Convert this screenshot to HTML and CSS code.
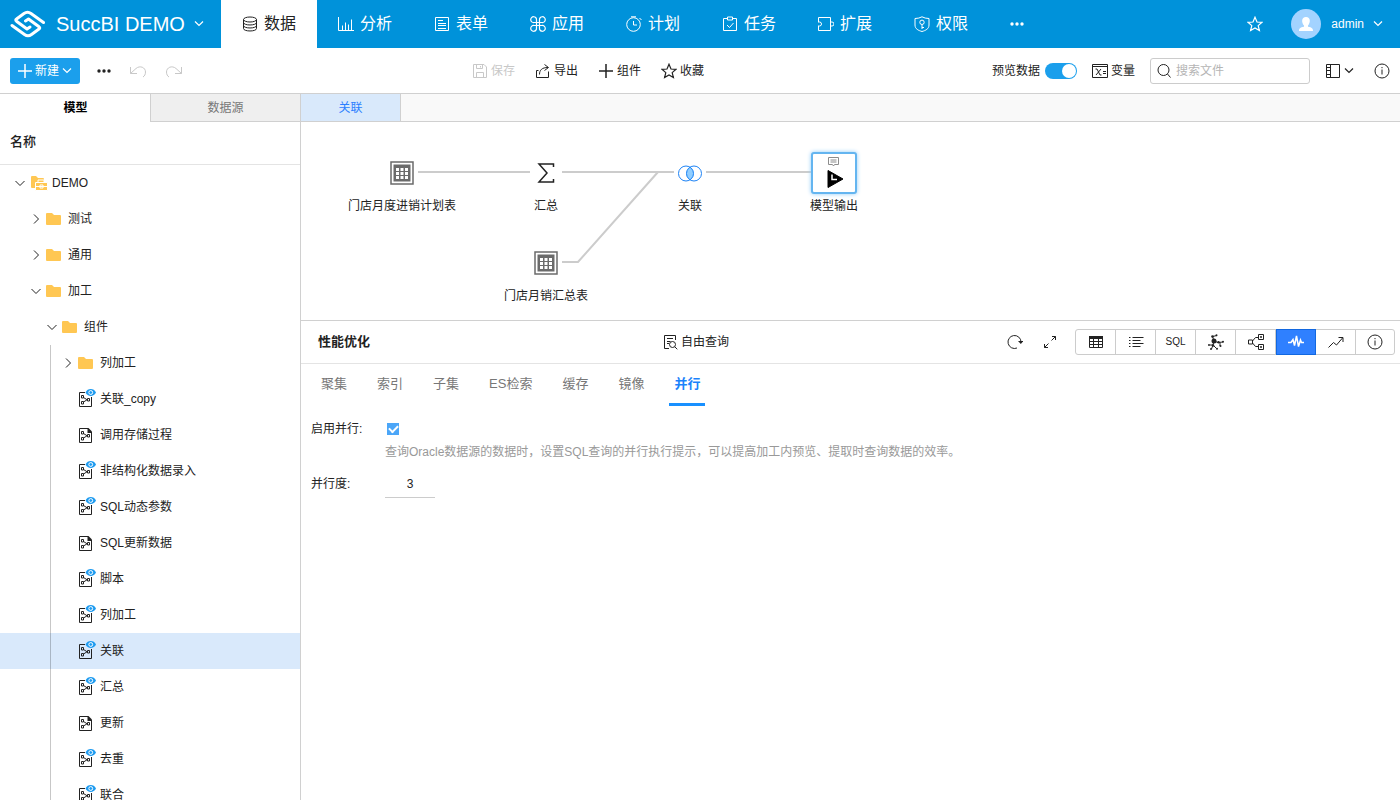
FILE: index.html
```html
<!DOCTYPE html>
<html lang="zh-CN">
<head>
<meta charset="utf-8">
<title>SuccBI DEMO</title>
<link rel="stylesheet" href="styles.css">
</head>
<body>
<svg class="defs" aria-hidden="true">
  <symbol id="down" viewBox="0 0 16 16"><path d="M3.500 6 8 10.500 12.500 6"/></symbol>
  <symbol id="down-sm" viewBox="0 0 12 12"><path stroke-width="1.200" d="M2 3.500 6 7.500 10 3.500"/></symbol>
  <symbol id="right" viewBox="0 0 16 16"><path d="M6 3.500 10.500 8 6 12.500"/></symbol>
  <symbol id="dots" viewBox="0 0 16 16"><g fill="currentColor" stroke="none"><circle cx="3" cy="8" r="1.700"/><circle cx="8" cy="8" r="1.700"/><circle cx="13" cy="8" r="1.700"/></g></symbol>
  <symbol id="plus" viewBox="0 0 16 16"><path stroke-width="1.500" d="M8 1v14M1 8h14"/></symbol>
  <symbol id="star" viewBox="0 0 16 16"><path stroke-width="1.200" d="M8 1.200 10 6l5 .3-3.800 3.300 1.200 5L8 12l-4.400 2.600 1.200-5L1 6.300 6 6z"/></symbol>
  <symbol id="info" viewBox="0 0 16 16"><circle cx="8" cy="8" r="7"/><path d="M8 6.500v5M8 4v1.200"/></symbol>
  <symbol id="folder" viewBox="0 0 20 20"><path fill="#ffc753" stroke="none" d="M0 5q0-1 1-1h5l2 2h6q1 0 1 1v8q0 1-1 1H1q-1 0-1-1z"/></symbol>
  <symbol id="project" viewBox="0 0 20 20"><path fill="#ffc753" stroke="none" d="M1 4q0-1 1-1h4l2 2h5q1 0 1 1v9H2q-1 0-1-1z"/><path fill="#ffc753" stroke="#fff" d="M5.500 9.500H8V7h6v2.500h3.500v8h-12z"/><path stroke="#fff" d="M8 9.500h6M6 13.500h11M10 12v3h3v-3z"/></symbol>
  <symbol id="file" viewBox="0 0 20 20"><path d="M10 3.500H1.500v14h12V8"/><path fill="currentColor" stroke="none" d="M9.500 3h1L14 6.500V8H9.500z"/><path d="M3.500 6.500h2V9h-2zM3.500 12.500h2V15h-2zM9.500 9.500h2V12h-2zM5.500 8.500 9.500 11M5.500 13l4-2.500"/></symbol>
  <symbol id="fileview" viewBox="0 0 20 20"><path d="M7 3.500H1.500v14h12V8"/><path d="M3.500 6.500h2V9h-2zM3.500 12.500h2V15h-2zM9.500 9.500h2V12h-2zM5.500 8.500 9.500 11M5.500 13l4-2.500"/><path fill="#1e9bf0" stroke="none" d="M7.500 3.500C9.500-1.100 16-1.100 18 3.500c-2 4.600-8.500 4.600-10.500 0z"/><circle cx="12.750" cy="3.500" r="1.900" stroke="#fff"/></symbol>
  <symbol id="table" viewBox="0 0 24 24"><path stroke="#6b6b6b" stroke-width="1.500" d="M1 1h22v22H1z"/><path fill="#6b6b6b" stroke="none" d="M3.500 3.500h17v17h-17z"/><path fill="#fff" stroke="none" d="M6 7h3v3H6zm4.500 0h3v3h-3zM15 7h3v3h-3zM6 11h3v3H6zm4.500 0h3v3h-3zm4.500 0h3v3h-3zM6 15h3v3H6zm4.500 0h3v3h-3zm4.500 0h3v3h-3z"/></symbol>
</svg>

<header class="topbar">
  <button class="brand">
    <svg class="logo" viewBox="0 0 36 28"><path d="M33.500 12.500 21 3.500Q17.500 1 14 3.500L6.500 9Q5 10 6.500 11.200L17 19l3-2M2 15.500 14.500 24.500Q18 27 21.500 24.500L29 19Q30.500 18 29 16.800L18.500 9l-3 2"/></svg>
    <span>SuccBI DEMO</span>
    <svg class="caret"><use href="#down-sm"/></svg>
  </button>
  <nav class="nav">
    <a href="#" class="active"><svg class="i" viewBox="0 0 16 16"><ellipse cx="8" cy="3.500" rx="6.500" ry="2.500"/><path d="M1.500 3.500v9c0 3.300 13 3.300 13 0v-9M1.500 6.500c0 3.300 13 3.300 13 0M1.500 9.500c0 3.300 13 3.300 13 0"/></svg>数据</a>
    <a href="#"><svg class="i" viewBox="0 0 16 16"><path d="M.5 1v13.500H16M4.500 14V9.500M7.500 14V6.500M10.500 14V8.500M13.500 14V3.500"/></svg>分析</a>
    <a href="#"><svg class="i" viewBox="0 0 16 16"><path d="M1.500 1.500h13v13h-13zM4 4.500h5M4 7.500h8M4 9.500h8M4 12.500h8"/></svg>表单</a>
    <a href="#"><svg class="i" viewBox="0 0 16 16"><path stroke-width="1.200" d="M6.500 6.500H4A2.900 2.900 0 1 1 6.500 4zM9.500 6.500V4A2.900 2.900 0 1 1 12 6.500zM6.500 9.500V12A2.900 2.900 0 1 1 4 9.500zM9.500 9.500H12A2.900 2.900 0 1 1 9.500 12zM6.500 6.500h3v3h-3z"/></svg>应用</a>
    <a href="#"><svg class="i" viewBox="0 0 16 16"><circle cx="7.500" cy="8.500" r="6.800"/><path d="M5 .8h5M7.500 5v4H11M13.500 2l2 2"/></svg>计划</a>
    <a href="#"><svg class="i" viewBox="0 0 16 16"><path d="M5 2.500H1.500v12h13v-12H11M5.500 1h5v3h-5zM5 9l2.500 2.500L11.500 7"/></svg>任务</a>
    <a href="#"><svg class="i" viewBox="0 0 16 16"><path d="M.5 6V1.500h12V6H14a2 2 0 0 1 0 4H12.500v4.500H.5V10M0 6h1.500a2 2 0 0 1 0 4H0M12.500 6v4"/></svg>扩展</a>
    <a href="#"><svg class="i" viewBox="0 0 16 16"><path d="M8 .8Q11 2.500 15 2.500V9c0 4-3.500 5.500-7 6.500C4.500 14.500 1 13 1 9V2.500Q5 2.500 8 .8zM8 8.500V13M8 11.500h2"/><circle cx="8" cy="6.300" r="2.200"/></svg>权限</a>
    <button class="more" aria-label="更多"><svg class="i"><use href="#dots"/></svg></button>
  </nav>
  <div class="account">
    <button aria-label="收藏夹"><svg class="i"><use href="#star"/></svg></button>
    <button class="user">
      <svg class="avatar" viewBox="0 0 30 30"><circle cx="15" cy="15" r="15" fill="#a3d3ff"/><path fill="#fff" d="M15 8c-5 0-4.500 6-2 8.500v1.300C9 18.500 8 19.500 8 22h14c0-2.500-1-3.500-5-4.200v-1.300C19.500 14 20 8 15 8z"/></svg>
      <span>admin</span>
      <svg class="caret"><use href="#down-sm"/></svg>
    </button>
  </div>
</header>

<div class="toolbar">
  <div class="tools-left">
    <button class="new"><svg class="i"><use href="#plus"/></svg>新建<svg class="caret"><use href="#down-sm"/></svg></button>
    <button aria-label="更多操作"><svg class="i"><use href="#dots"/></svg></button>
    <button class="off" aria-label="撤销"><svg class="wide" viewBox="0 0 20 16"><path d="M2.500 4v6.500H9M2.500 10.500 8 5.500C12 2 17.500 4.500 17.500 9c0 2.500-1 4-2.500 5"/></svg></button>
    <button class="off" aria-label="重做"><svg class="wide" viewBox="0 0 20 16"><path d="M17.500 4v6.500H11M17.500 10.500 12 5.500C8 2 2.500 4.500 2.500 9c0 2.500 1 4 2.500 5"/></svg></button>
  </div>
  <div class="tools-mid">
    <button class="off"><svg class="i" viewBox="0 0 16 16"><path d="M1.500 1.500H12l2.500 2.500v10.500h-13zM4.500 1.500v4h6v-4M8.500 3v1.500M4.500 14.500v-5h7v5"/></svg>保存</button>
    <button><svg class="i" viewBox="0 0 16 16"><path d="M3.500 7.500h-2v7h12V8.500M4.500 11.500C4.500 7 7 4.500 13 4.500M9.500 1.500l4 3-4 3"/></svg>导出</button>
    <button><svg class="i"><use href="#plus"/></svg>组件</button>
    <button><svg class="i"><use href="#star"/></svg>收藏</button>
  </div>
  <div class="tools-right">
    <label class="preview">预览数据<input type="checkbox" class="switch" checked></label>
    <button class="var"><svg class="i" viewBox="0 0 16 16"><path d="M.5 1.500h15v13H.5zM.5 3.500h15M3.500 6h1.500l3 6h1.500M9 6 4 12M11 8.500h3M11 10.500h3"/></svg>变量</button>
    <div class="search"><svg class="i" viewBox="0 0 16 16"><circle cx="7.500" cy="7" r="5.500"/><path d="m11.500 11 3 3.500"/></svg><input type="text" placeholder="搜索文件" aria-label="搜索文件"></div>
    <button class="view" aria-label="视图"><svg class="i" viewBox="0 0 16 16"><path d="M1.500 1.500h13v13h-13zM5.500 1.500v13M1.500 4.500h4M1.500 7.500h4M1.500 11.500h4"/></svg><svg class="caret"><use href="#down-sm"/></svg></button>
    <button aria-label="信息"><svg class="i"><use href="#info"/></svg></button>
  </div>
</div>

<div class="body">
  <aside class="side">
    <div class="side-tabs" role="tablist"><button role="tab" class="on" aria-selected="true">模型</button><button role="tab">数据源</button></div>
    <div class="side-head">名称</div>
    <ul class="tree">
      <li><div class="row l0"><svg class="chev"><use href="#down"/></svg><svg class="ic"><use href="#project"/></svg>DEMO</div>
        <ul>
          <li><div class="row l1"><svg class="chev"><use href="#right"/></svg><svg class="ic"><use href="#folder"/></svg>测试</div></li>
          <li><div class="row l1"><svg class="chev"><use href="#right"/></svg><svg class="ic"><use href="#folder"/></svg>通用</div></li>
          <li><div class="row l1"><svg class="chev"><use href="#down"/></svg><svg class="ic"><use href="#folder"/></svg>加工</div>
            <ul>
              <li><div class="row l2"><svg class="chev"><use href="#down"/></svg><svg class="ic"><use href="#folder"/></svg>组件</div>
                <ul class="guide">
                  <li><div class="row l3"><svg class="chev"><use href="#right"/></svg><svg class="ic"><use href="#folder"/></svg>列加工</div></li>
                  <li><div class="row leaf"><svg class="ic"><use href="#fileview"/></svg>关联_copy</div></li>
                  <li><div class="row leaf"><svg class="ic"><use href="#file"/></svg>调用存储过程</div></li>
                  <li><div class="row leaf"><svg class="ic"><use href="#fileview"/></svg>非结构化数据录入</div></li>
                  <li><div class="row leaf"><svg class="ic"><use href="#fileview"/></svg>SQL动态参数</div></li>
                  <li><div class="row leaf"><svg class="ic"><use href="#file"/></svg>SQL更新数据</div></li>
                  <li><div class="row leaf"><svg class="ic"><use href="#fileview"/></svg>脚本</div></li>
                  <li><div class="row leaf"><svg class="ic"><use href="#fileview"/></svg>列加工</div></li>
                  <li><div class="row leaf selected"><svg class="ic"><use href="#fileview"/></svg>关联</div></li>
                  <li><div class="row leaf"><svg class="ic"><use href="#fileview"/></svg>汇总</div></li>
                  <li><div class="row leaf"><svg class="ic"><use href="#file"/></svg>更新</div></li>
                  <li><div class="row leaf"><svg class="ic"><use href="#fileview"/></svg>去重</div></li>
                  <li><div class="row leaf"><svg class="ic"><use href="#fileview"/></svg>联合</div></li>
                </ul>
              </li>
            </ul>
          </li>
        </ul>
      </li>
    </ul>
  </aside>

  <main class="main">
    <div class="doc-tabs"><button>关联</button></div>
    <section class="canvas">
      <svg class="wires" aria-hidden="true"><path d="M117 50h112M261 50h112M405 50h106M261 140h16L357 50"/></svg>
      <div class="node n1"><span class="glyph"><svg class="tbl"><use href="#table"/></svg></span>门店月度进销计划表</div>
      <div class="node n2"><span class="glyph"><svg class="tbl" viewBox="0 0 24 24"><path stroke="#222" stroke-width="1.500" d="M19.500 6V3H5l8 9-8 9h14.500v-3"/></svg></span>汇总</div>
      <div class="node n3"><span class="glyph"><svg class="tbl" viewBox="0 0 24 24"><path fill="#91ceff" stroke="none" d="M12 6a7.500 7.500 0 0 1 0 13 7.500 7.500 0 0 1 0-13z"/><g stroke="#1c82f5"><circle cx="8" cy="12.500" r="7.500"/><circle cx="16" cy="12.500" r="7.500"/></g></svg></span>关联</div>
      <div class="node n4"><span class="glyph picked"><svg class="out" viewBox="0 0 40 38"><path stroke="#8c8c8c" d="M14.500 3.500h10v7h-4L19.500 12l-1-1.500h-4zM16.500 6h6M16.500 8h6"/><path fill="#000" stroke="#000" stroke-linejoin="round" d="M14 16.500v17l15-8.500z"/><path stroke="#fff" stroke-width="1.500" d="M18 20.500v5h5"/></svg></span>模型输出</div>
      <div class="node n5"><span class="glyph"><svg class="tbl"><use href="#table"/></svg></span>门店月销汇总表</div>
    </section>

    <section class="panel">
      <div class="panel-head">
        <h2>性能优化</h2>
        <button class="query"><svg class="i" viewBox="0 0 16 16"><path d="M7 14.500H2.500v-13h11V6M5 4.500h6M5 7.500h3.500M5 9.500h2"/><circle cx="10.500" cy="10.500" r="3"/><path d="m12.800 12.800 2.500 2.500"/></svg>自由查询</button>
        <div class="actions">
          <button class="act" aria-label="刷新"><svg class="i" viewBox="0 0 16 16"><path d="M10 14A6.500 6.500 0 1 1 14 8"/><path fill="currentColor" stroke="none" d="M11 7h5.500l-2.700 3z"/></svg></button>
          <button class="act" aria-label="展开"><svg class="i" viewBox="0 0 16 16"><path d="M9.500 6.500 13.500 2.500M10 2.500h3.500V6M6.500 9.500l-4 4M2.500 10v3.500H6"/></svg></button>
          <div class="group">
            <button aria-label="数据"><svg class="i" viewBox="0 0 16 16"><path d="M1.500 2.500h13v11h-13zM1.500 7.500h13M1.500 10.500h13M5.500 5v8.500M10.500 5v8.500"/><path fill="currentColor" stroke="none" d="M1 2h14v3H1z"/></svg></button>
            <button aria-label="字段"><svg class="i" viewBox="0 0 16 16"><path d="M1 3.500h1.500M1 6.500h1.500M1 9.500h1.500M1 12.500h1.500M4.500 3.500h11M4.500 6.500h8M4.500 9.500h11M4.500 12.500h8"/></svg></button>
            <button class="sql">SQL</button>
            <button aria-label="血缘"><svg class="i" viewBox="0 0 16 16"><path d="M6 7 4.500 2.500 9 1.500M6 7l4 1.500 5-.5M12 8.500V12M6 7l-1 4M5 11l-3 0M5 11l-1.500 4M5 11l3.500 3.500"/><g fill="currentColor" stroke="none"><circle cx="6" cy="7" r="2.500"/><circle cx="4.500" cy="2.500" r="1.300"/><circle cx="8.500" cy="1.200" r="1"/><circle cx="10.500" cy="8.300" r="1.200"/><circle cx="15" cy="7.800" r="1"/><circle cx="12.500" cy="12" r="1"/><circle cx="5" cy="11.500" r="1.300"/><circle cx="1" cy="11" r="1"/><circle cx="3" cy="15" r="1"/><circle cx="9" cy="14.800" r="1"/></g></svg></button>
            <button aria-label="关系"><svg class="i" viewBox="0 0 16 16"><path d="M.5 6h4v4h-4zM10.500 .5h5v5h-5zM10.500 10.500h5v5h-5zM12.500 2.500h1v1h-1zM12.500 12.500h1v1h-1zM4.500 7l3-3.500h3M4.500 9l3 3.500h3"/></svg></button>
            <button class="current" aria-label="性能优化"><svg class="pulse" viewBox="0 0 18 16"><path stroke-width="1.500" d="M1 8.500h3l2-3 1.500 6L9.500 2l2 10.500L13.500 6l1 2.500H17"/></svg></button>
            <button aria-label="趋势"><svg class="i" viewBox="0 0 16 16"><path d="m.5 13.500 5-5L8.500 11l6-7M10.500 3.500H15V8"/></svg></button>
            <button aria-label="说明"><svg class="i"><use href="#info"/></svg></button>
          </div>
        </div>
      </div>
      <div class="tabs" role="tablist">
        <button role="tab">聚集</button><button role="tab">索引</button><button role="tab">子集</button><button role="tab">ES检索</button><button role="tab">缓存</button><button role="tab">镜像</button><button role="tab" class="on" aria-selected="true">并行</button>
      </div>
      <form class="form">
        <label for="parallel">启用并行:</label>
        <div class="check"><input type="checkbox" id="parallel" checked></div>
        <p>查询Oracle数据源的数据时，设置SQL查询的并行执行提示，可以提高加工内预览、提取时查询数据的效率。</p>
        <label for="degree">并行度:</label>
        <input type="text" id="degree" class="degree" value="3">
      </form>
    </section>
  </main>
</div>
</body>
</html>
```

FILE: styles.css
```css
* { box-sizing: border-box; }
body {
  margin: 0;
  height: 100vh;
  display: flex;
  flex-direction: column;
  overflow: hidden;
  color: #222;
  background: #fff;
  font: 12px/18px "Liberation Sans", "Noto Sans CJK SC", sans-serif;
}
button, input { font: inherit; color: inherit; }
button {
  display: flex;
  align-items: center;
  justify-content: center;
  padding: 0;
  border: 0;
  background: none;
}
ul { list-style: none; margin: 0; padding: 0; }
svg { fill: none; stroke: currentColor; flex: none; }
.defs { position: absolute; width: 0; height: 0; }
.i { width: 16px; height: 16px; }
.caret { width: 12px; height: 12px; }
.wide { width: 20px; height: 16px; }

/* top bar */
.topbar { display: flex; flex: none; height: 48px; background: #0092da; color: #fff; }
.brand { width: 221px; padding: 0 14px 0 10px; justify-content: flex-start; font-size: 20px; gap: 10px; }
.brand span { white-space: nowrap; }
.brand .caret { margin-left: -2px; }
.logo { width: 36px; height: 28px; stroke-width: 3; stroke-linecap: round; stroke-linejoin: round; }
.nav { display: flex; flex: 1; }
.nav a {
  width: 96px;
  display: flex;
  align-items: center;
  justify-content: center;
  gap: 6px;
  color: #fff;
  font-size: 16px;
  text-decoration: none;
}
.nav a.active { background: #fff; color: #222; }
.more { width: 56px; }
.account { display: flex; align-items: center; gap: 28px; padding-right: 16px; }
.user { gap: 10px; }
.user .caret { margin-left: -2px; }
.avatar { width: 30px; height: 30px; stroke: none; }

/* toolbar */
.toolbar {
  display: flex;
  flex: none;
  justify-content: space-between;
  align-items: center;
  height: 46px;
  padding: 0 10px;
  border-bottom: 1px solid #d0d0d0;
}
.toolbar > div { display: flex; align-items: center; }
.tools-left { gap: 16px; }
.new { width: 70px; height: 26px; border-radius: 3px; background: #1b9fec; color: #fff; gap: 2px; }
.off { color: #c8c8c8; }
.tools-mid { gap: 20px; }
.tools-mid button { gap: 3px; }
.tools-right { gap: 15px; }
.preview { display: flex; align-items: center; gap: 5px; }
.switch {
  appearance: none;
  display: flex;
  justify-content: flex-end;
  width: 32px;
  height: 16px;
  margin: 0;
  border-radius: 8px;
  background: #1b9fec;
}
.switch::before { content: ""; width: 14px; height: 14px; margin: 1px; border-radius: 50%; background: #fff; }
.var { gap: 3px; }
.search {
  display: flex;
  align-items: center;
  gap: 4px;
  width: 160px;
  height: 26px;
  padding: 0 5px;
  border: 1px solid #ccc;
  border-radius: 3px;
}
.search input { width: 100%; min-width: 0; padding: 0; border: 0; outline: 0; background: none; }
.search input::placeholder { color: #b5b5b5; }
.view { gap: 2px; margin-right: 4px; }

/* sidebar */
.body { display: flex; flex: 1; min-height: 0; }
.side { width: 301px; flex: none; border-right: 1px solid #d0d0d0; overflow: hidden; }
.side-tabs { display: flex; height: 28px; }
.side-tabs button { flex: 1; border: solid #d0d0d0; border-width: 0 0 1px 1px; background: #efefef; color: #777; }
.side-tabs .on { border-color: #fff; background: #fff; color: #000; font-weight: 700; }
.side-head { height: 43px; padding: 11px 10px; border-bottom: 1px solid #e4e4e4; font-size: 13px; font-weight: 500; }
.row { display: flex; align-items: center; gap: 2px; height: 36px; }
.l0 { padding-left: 12px; }
.l1 { padding-left: 28px; }
.l2 { padding-left: 44px; }
.l3 { padding-left: 60px; }
.leaf { padding-left: 78px; }
.chev { width: 16px; height: 16px; }
.ic { width: 20px; height: 20px; }
.selected { background: #d9e9fb; }
.guide { position: relative; }
.guide::before { content: ""; position: absolute; left: 50px; top: 0; bottom: 0; border-left: 1px solid rgba(0, 0, 0, .22); }

/* model canvas */
.main { display: flex; flex: 1; flex-direction: column; min-width: 0; }
.doc-tabs { display: flex; flex: none; height: 28px; border-bottom: 1px solid #d0d0d0; background: #f9f9f9; }
.doc-tabs button { width: 100px; border-right: 1px solid #d0d0d0; background: #d9e9fb; color: #2b7fff; }
.canvas { position: relative; flex: none; height: 199px; border-bottom: 1px solid #d0d0d0; }
.wires { position: absolute; inset: 0; width: 100%; height: 100%; stroke: #ccc; stroke-width: 2; }
.node { position: absolute; top: 30px; width: 140px; display: flex; flex-direction: column; align-items: center; gap: 3px; }
.n1 { left: 31px; }
.n2 { left: 175px; }
.n3 { left: 319px; }
.n4 { left: 463px; }
.n5 { left: 175px; top: 120px; }
.glyph { display: flex; align-items: center; justify-content: center; width: 46px; height: 42px; }
.tbl { width: 24px; height: 24px; }
.picked { border: 2px solid #64b5f0; border-radius: 3px; background: #fff; box-shadow: 0 0 4px #8fcbf8; }
.out { width: 40px; height: 38px; }

/* settings panel */
.panel-head {
  display: flex;
  align-items: center;
  justify-content: space-between;
  height: 43px;
  padding: 0 5px 0 17px;
  border-bottom: 1px solid #e4e4e4;
}
h2 { margin: 0; padding-right: 16px; font-size: 13px; font-weight: 700; }
.query { gap: 3px; }
.actions { display: flex; align-items: center; gap: 15px; }
.act { width: 20px; height: 20px; }
.group { display: flex; height: 26px; border: 1px solid #ccc; border-radius: 3px; }
.group button { width: 40px; border-right: 1px solid #ccc; }
.group button:first-child { width: 40px; }
.group button:last-child { width: 38px; border-right: 0; }
.group .sql { font-size: 10px; }
.group .current { margin: -1px 0; border: 1px solid #1268e0; background: #2f80ff; color: #fff; }
.pulse { width: 18px; height: 16px; }
.tabs { display: flex; gap: 20px; height: 42px; padding: 0 15px; font-size: 13px; color: #777; }
.tabs button { padding: 0 5px; border: solid transparent; border-width: 0 0 3px; }
.tabs .on { border-color: #1890ff; color: #1b82fb; font-weight: 700; }
.form {
  display: grid;
  grid-template-columns: 74px 1fr;
  align-items: center;
  padding: 14px 10px;
}
.check { display: flex; padding-left: 2px; }
.check input {
  appearance: none;
  display: grid;
  place-items: center;
  width: 12px;
  height: 12px;
  margin: 0;
  background: #4ba6f8;
}
.check input::before {
  content: "";
  width: 7px;
  height: 4px;
  margin-bottom: 2px;
  border: solid #fff;
  border-width: 0 0 2px 2px;
  transform: rotate(-45deg);
}
.form p { grid-column: 2; margin: 5px 0 9px; color: #999; }
.degree { width: 50px; height: 28px; padding: 0; border: 0; border-bottom: 1px solid #ccc; outline: 0; text-align: center; }
```
